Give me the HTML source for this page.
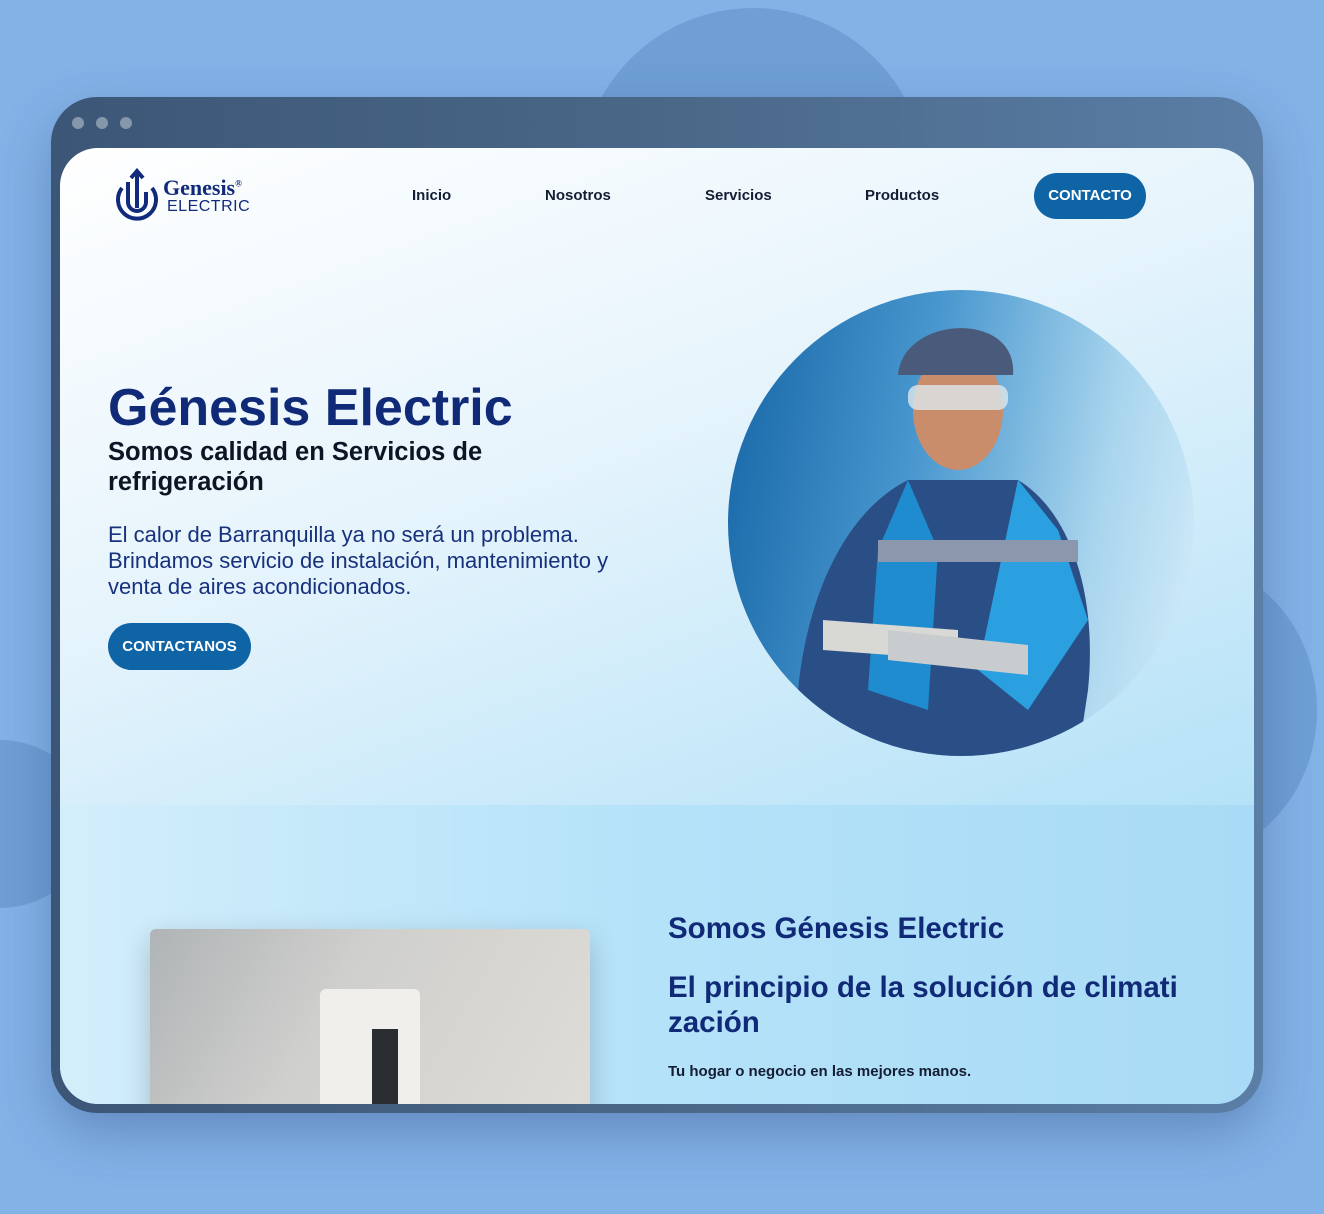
<!DOCTYPE html>
<html><head><meta charset="utf-8"><style>
*{margin:0;padding:0;box-sizing:border-box}
body{width:1324px;height:1214px;background:#83b2e7;position:relative;overflow:hidden;font-family:"Liberation Sans",Arial,sans-serif}
.c{position:absolute;border-radius:50%;background:#6f9fd5}
.win{position:absolute;left:51px;top:97px;width:1212px;height:1016px;border-radius:46px;background:linear-gradient(90deg,#3c5677,#4a6787 50%,#5a7ea6);box-shadow:0 20px 50px rgba(40,70,120,.35)}
.dot{position:absolute;top:117px;width:12px;height:12px;border-radius:50%;background:#8797ab}
.in{position:absolute;left:60px;top:148px;width:1194px;height:956px;border-radius:38px;overflow:hidden;background:linear-gradient(160deg,#fff 0%,#e6f4fc 35%,#b8e3f8 75%,#a6daf5 100%)}
.low{position:absolute;left:0;top:657px;width:100%;height:300px;background:linear-gradient(90deg,#d3eefb,#b4e2f9 50%,#a9dbf6)}
.nav{position:absolute;top:39px;font-size:15px;font-weight:bold;color:#141d33}
.btn{position:absolute;background:#0f64a6;color:#fff;font-weight:bold;font-size:15px;border-radius:24px;text-align:center}
h1{position:absolute;left:48px;top:230px;font-size:52px;color:#112a78;font-weight:bold}
.sub{position:absolute;left:48px;top:289px;font-size:25.5px;font-weight:bold;color:#0d1424;line-height:30px;width:440px}
.p{position:absolute;left:48px;top:374px;font-size:22px;color:#17317d;line-height:26px;width:560px}
.h2{position:absolute;left:608px;font-weight:bold;color:#112a78}
</style></head><body>
<div class="c" style="left:580px;top:8px;width:346px;height:346px"></div>
<div class="c" style="left:1045px;top:560px;width:272px;height:300px"></div>
<div class="c" style="left:-90px;top:740px;width:180px;height:168px"></div>
<div class="win"></div>
<div class="dot" style="left:72px"></div><div class="dot" style="left:96px"></div><div class="dot" style="left:120px"></div>
<div class="in">
 <div class="low"></div>
 <svg style="position:absolute;left:52px;top:20px" width="50" height="56" viewBox="0 0 50 56"><g fill="none" stroke="#122a7c" stroke-width="4"><path d="M10 20 A19 19 0 1 0 40 20"/><path d="M16 14 V34 A9 9 0 0 0 34 34 V24"/><path d="M25 4 V40"/><path d="M19 10 L25 3 L31 10"/></g></svg>
 <div style="position:absolute;left:103px;top:27px;font-family:'Liberation Serif',serif;font-weight:bold;font-size:22px;color:#122a7c">Genesis<sup style="font-size:9px">®</sup></div>
 <div style="position:absolute;left:107px;top:50px;font-size:16px;color:#122a7c;letter-spacing:.5px">ELECTRIC</div>
 <div class="nav" style="left:352px">Inicio</div>
 <div class="nav" style="left:485px">Nosotros</div>
 <div class="nav" style="left:645px">Servicios</div>
 <div class="nav" style="left:805px">Productos</div>
 <div class="btn" style="left:974px;top:25px;width:112px;height:46px;line-height:46px">CONTACTO</div>
 <h1>Génesis Electric</h1>
 <div class="sub">Somos calidad en Servicios de refrigeración</div>
 <div class="p">El calor de Barranquilla ya no será un problema. Brindamos servicio de instalación, mantenimiento y venta de aires acondicionados.</div>
 <div class="btn" style="left:48px;top:475px;width:143px;height:47px;line-height:47px">CONTACTANOS</div>
 <div style="position:absolute;left:668px;top:142px;width:466px;height:466px;border-radius:50%;background:linear-gradient(100deg,#1565a6 0%,#4a98cf 40%,#a9d5ee 75%,#d6eefa 100%);overflow:hidden">
  <svg width="466" height="466" viewBox="0 0 466 466">
   <path d="M70 400 C80 300 120 220 180 190 L290 190 C340 220 370 300 360 400 L350 466 L120 466Z" fill="#2a4f86"/>
   <path d="M180 190 L150 260 L140 400 L200 420 L210 260Z" fill="#1e8ccf"/>
   <path d="M290 190 L330 240 L360 330 L300 420 L250 380Z" fill="#2aa0e0"/>
   <rect x="150" y="250" width="200" height="22" fill="#8a97ad"/>
   <path d="M95 330 L230 340 L230 370 L95 360Z" fill="#d8d8d4"/>
   <path d="M160 340 L300 355 L300 385 L160 370Z" fill="#c9ccce"/>
   <ellipse cx="230" cy="120" rx="45" ry="60" fill="#c98d6c"/>
   <path d="M170 85 C175 25 290 20 285 85 Z" fill="#4a5a7a"/>
   <rect x="180" y="95" width="100" height="25" rx="10" fill="#dce7ee" opacity=".8"/>
  </svg>
 </div>
 <div style="position:absolute;left:90px;top:781px;width:440px;height:200px;border-radius:6px;background:linear-gradient(120deg,#b0b4b6,#cfcfcd 40%,#e0ddd8);box-shadow:0 10px 30px rgba(0,0,0,.2)">
  <div style="position:absolute;left:170px;top:60px;width:100px;height:120px;background:#f0efec;border-radius:6px"></div>
  <div style="position:absolute;left:222px;top:100px;width:26px;height:80px;background:#2a2e33"></div>
 </div>
 <div class="h2" style="top:764px;font-size:29.5px">Somos Génesis Electric</div>
 <div class="h2" style="top:822px;font-size:29.5px;line-height:35px;width:540px">El principio de la solución de climati zación</div>
 <div style="position:absolute;left:608px;top:915px;font-size:15px;font-weight:bold;color:#141d33">Tu hogar o negocio en las mejores manos.</div>
</div>
</body></html>
